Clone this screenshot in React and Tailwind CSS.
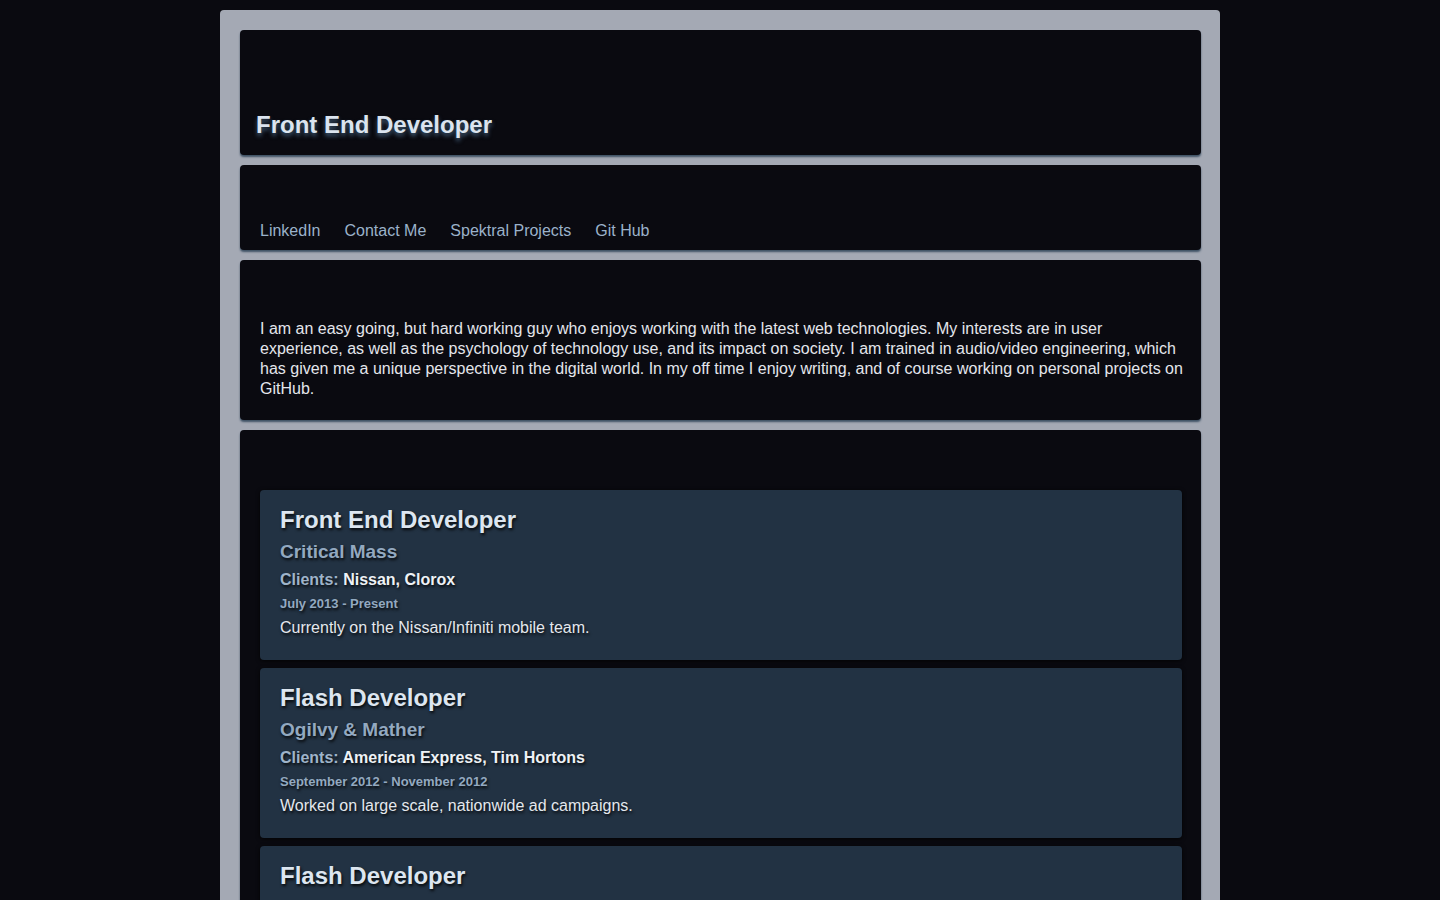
import React from 'react';

const links = ['LinkedIn', 'Contact Me', 'Spektral Projects', 'Git Hub'];

const jobs = [
  {
    title: 'Front End Developer',
    company: 'Critical Mass',
    clients: 'Nissan, Clorox',
    dates: 'July 2013 - Present',
    desc: 'Currently on the Nissan/Infiniti mobile team.',
  },
  {
    title: 'Flash Developer',
    company: 'Ogilvy & Mather',
    clients: 'American Express, Tim Hortons',
    dates: 'September 2012 - November 2012',
    desc: 'Worked on large scale, nationwide ad campaigns.',
  },
  {
    title: 'Flash Developer',
    company: 'Agency',
    clients: 'Various',
    dates: '2011 - 2012',
    desc: 'Built interactive banner campaigns.',
  },
];

const JobCard = ({ job }) => (
  <div className="bg-[#223243] rounded-[4px] shadow-[0_1px_4px_rgba(0,0,0,0.8)] px-5 pt-[16px] pb-[22px] [text-shadow:1px_2px_3px_rgba(0,0,0,0.85)]">
    <h2 className="text-[24px] leading-[28px] font-bold text-[#dde6f0]">{job.title}</h2>
    <h3 className="mt-[6px] text-[19px] leading-[24px] font-bold text-[#93a9c0]">{job.company}</h3>
    <p className="mt-[6px] text-[16px] leading-[20px] font-bold text-[#eef2f6]">
      <span className="text-[#9fb4ca]">Clients:</span> {job.clients}
    </p>
    <p className="mt-[6px] text-[13px] leading-[16px] font-bold text-[#93a9c0]">{job.dates}</p>
    <p className="mt-[6px] text-[16px] leading-[20px] text-[#e4e8ee]">{job.desc}</p>
  </div>
);

const Panel = ({ className = '', children }) => (
  <div className={`bg-[#0a0a10] rounded-[4px] shadow-[0_2px_2px_#3f5265] ${className}`}>{children}</div>
);

export default function App() {
  return (
    <div className="min-h-screen bg-[#0a0a10] pt-[10px] font-['Liberation_Sans',Arial,sans-serif]">
      <div className="w-[1000px] mx-auto bg-[#a4a9b4] rounded-t-[4px] pl-5 pr-[19px] pt-5 pb-5 flex flex-col gap-[10px]">
        <Panel className="h-[125px] flex items-end px-4 pb-[16px]">
          <h1 className="text-[24px] leading-[28px] font-bold text-[#dbe4ef] [text-shadow:0_3px_4px_rgba(70,100,130,0.9)]">
            Front End Developer
          </h1>
        </Panel>

        <Panel className="h-[85px] flex items-end px-5 pb-[9px]">
          <nav className="flex gap-6">
            {links.map((l) => (
              <a key={l} href="#" className="text-[16px] leading-[20px] text-[#9bb2ca]">
                {l}
              </a>
            ))}
          </nav>
        </Panel>

        <Panel className="pl-5 pr-[12px] pt-[59px] pb-[21px]">
          <p className="text-[16px] leading-[20px] text-[#e4e6ec]">
            I am an easy going, but hard working guy who enjoys working with the latest web technologies. My interests are in user experience, as well as the psychology of technology use, and its impact on society. I am trained in audio/video engineering, which has given me a unique perspective in the digital world. In my off time I enjoy writing, and of course working on personal projects on GitHub.
          </p>
        </Panel>

        <Panel className="pl-5 pr-[19px] pt-[60px] pb-5 flex flex-col gap-[8px]">
          {jobs.map((j, i) => (
            <JobCard key={i} job={j} />
          ))}
        </Panel>
      </div>
    </div>
  );
}
